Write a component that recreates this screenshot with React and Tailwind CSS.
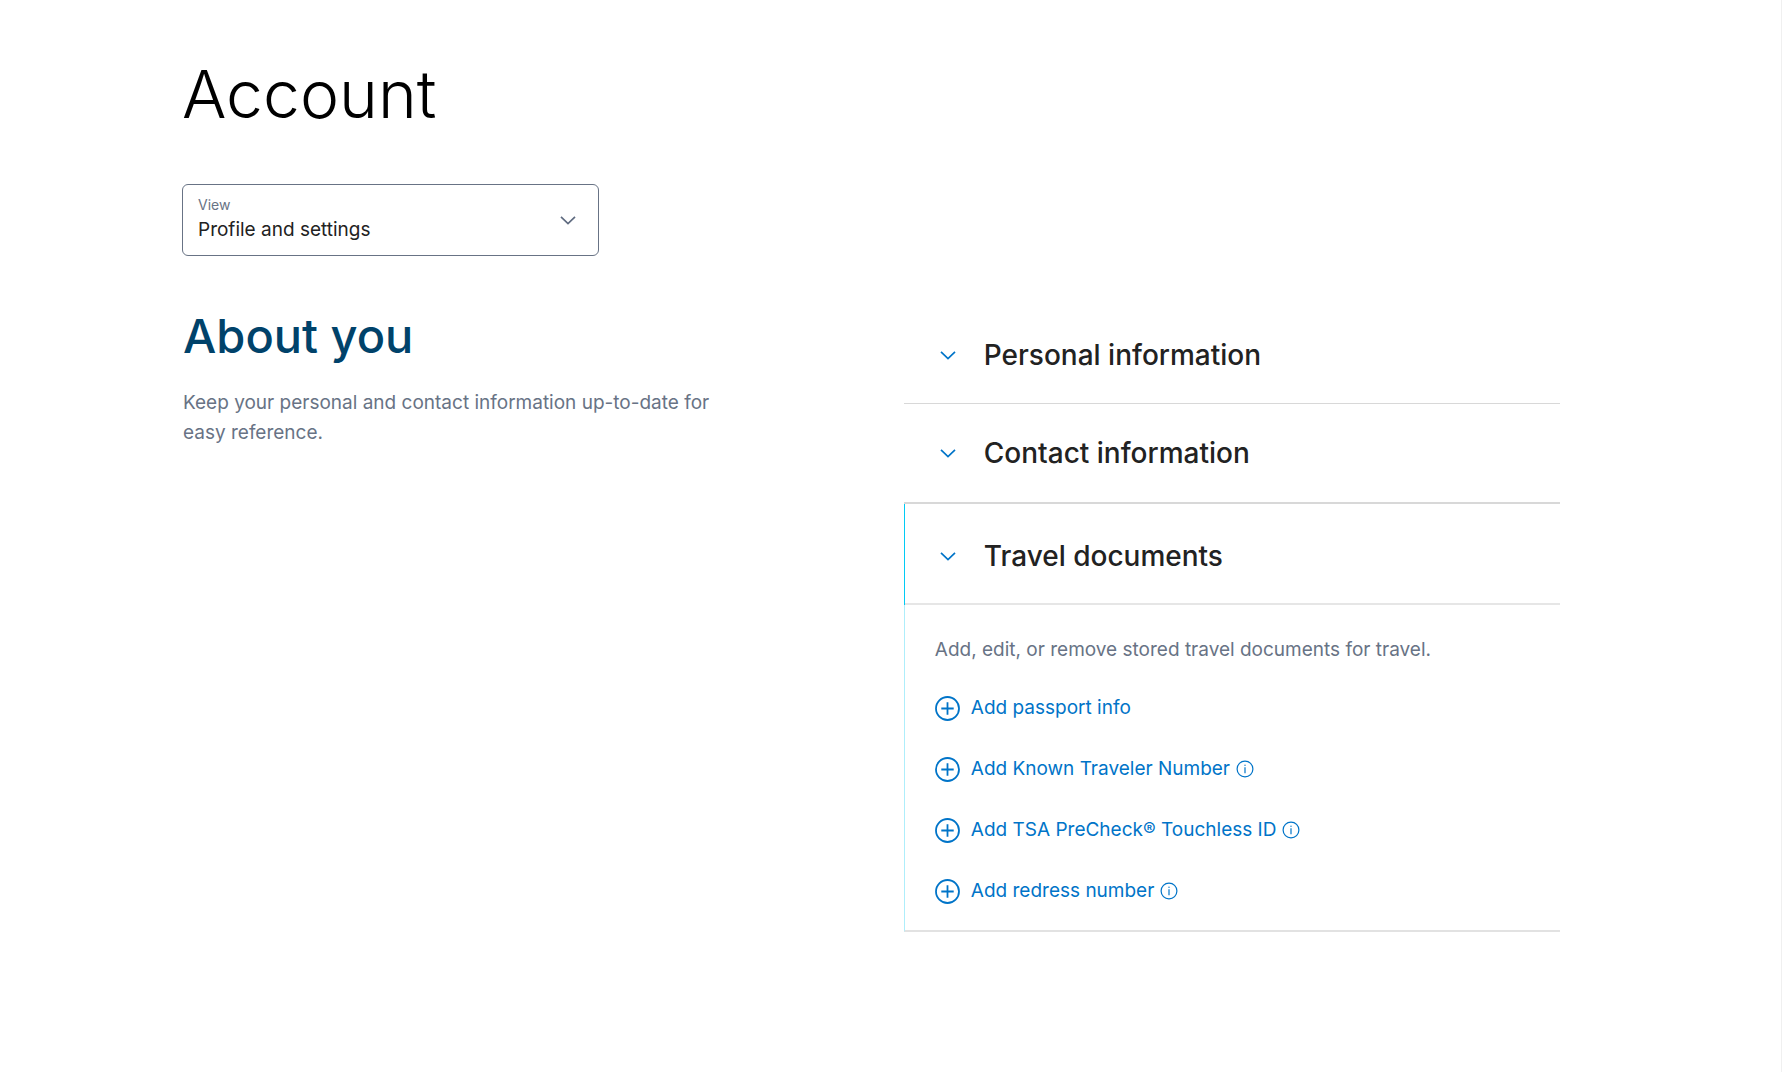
function Chevron({ className }) {
  return (
    <svg viewBox="0 0 16 16" fill="none" stroke="currentColor" strokeWidth="1.7" className={className} aria-hidden="true">
      <path d="M1 4.9 8 11.5 15 4.9" />
    </svg>
  );
}

function PlusCircle() {
  return (
    <svg viewBox="0 0 25 25" fill="none" stroke="currentColor" strokeWidth="1.8" className="size-[25px] shrink-0" aria-hidden="true">
      <circle cx="12.5" cy="12.5" r="11.5" />
      <path d="M12.5 6.3v12.4M6.3 12.5h12.4" />
    </svg>
  );
}

function InfoCircle() {
  return (
    <svg viewBox="0 0 18 18" fill="none" stroke="currentColor" strokeWidth="1.2" className="size-[18px]" aria-hidden="true">
      <circle cx="9" cy="9" r="7.9" />
      <path d="M9 7.2v6" />
      <circle cx="9" cy="5.2" r="0.7" fill="currentColor" stroke="none" />
    </svg>
  );
}

function SectionButton({ title, expanded, className }) {
  return (
    <h3>
      <button type="button" aria-expanded={expanded} className={`flex w-full items-center gap-7 text-left ${className}`}>
        <Chevron className="size-4 text-[#0074c8]" />
        <span className="text-[28px] leading-10 font-medium text-[#222222]">{title}</span>
      </button>
    </h3>
  );
}

const links = [
  { label: "Add passport info", info: false },
  { label: "Add Known Traveler Number", info: true },
  { label: "Add TSA PreCheck® Touchless ID", info: true },
  { label: "Add redress number", info: true },
];

export default function App() {
  return (
    <div className="min-h-screen border-r border-[#f0f0f0] bg-white pt-[54px] pr-[221px] pb-12 pl-[182px] font-['Inter',sans-serif]">
      <h1 className="text-[66px] leading-20 font-light text-black">Account</h1>

      <div className="relative mt-[50px] w-full max-w-[417px]">
        <label htmlFor="view" className="pointer-events-none absolute top-[11px] left-4 text-sm leading-5 text-[#687385]">
          View
        </label>
        <select
          id="view"
          className="h-18 w-full appearance-none rounded-md border border-[#687385] bg-white pt-6 pr-12 pb-1 pl-[15px] text-[19px] text-[#222222]"
        >
          <option>Profile and settings</option>
        </select>
        <Chevron className="pointer-events-none absolute top-7 right-[23px] size-4 text-[#5f6b80]" />
      </div>

      <main className="mt-12 grid grid-cols-[11fr_10fr]">
        <section className="pt-1 pl-px">
          <h2 className="text-[47px] leading-14 font-medium text-[#00426a]">About you</h2>
          <p className="mt-6 max-w-[560px] text-[19px] leading-[30px] text-[#687385]">
            Keep your personal and contact information up-to-date for easy reference.
          </p>
        </section>

        <section className="pt-[3px]">
          <SectionButton title="Personal information" expanded={false} className="h-[97px] border-b border-[#d8d8d8] pl-9" />
          <SectionButton title="Contact information" expanded={false} className="h-[100px] border-b-2 border-[#d8d8d8] pl-9" />
          <div>
            <div className="border-l border-[#01cbf5]">
              <SectionButton title="Travel documents" expanded className="h-[101px] border-b-2 border-[#e6e6e6] pt-1 pl-[35px]" />
            </div>
            <div className="border-b-2 border-l border-b-[#e2e2e2] border-l-[#aeeefb] px-[30px] pt-[30px] pb-6">
              <p className="text-[19px] leading-[30px] text-[#687385]">Add, edit, or remove stored travel documents for travel.</p>
              <ul className="mt-7 flex flex-col gap-[31px]">
                {links.map((link) => (
                  <li key={link.label} className="flex h-[30px] items-center text-[#0074c8]">
                    <a href="#" className="flex items-center gap-[11px] text-[19px]">
                      <PlusCircle />
                      {link.label}
                    </a>
                    {link.info && (
                      <button type="button" aria-label={`About: ${link.label}`} className="ml-[6px]">
                        <InfoCircle />
                      </button>
                    )}
                  </li>
                ))}
              </ul>
            </div>
          </div>
        </section>
      </main>
    </div>
  );
}
